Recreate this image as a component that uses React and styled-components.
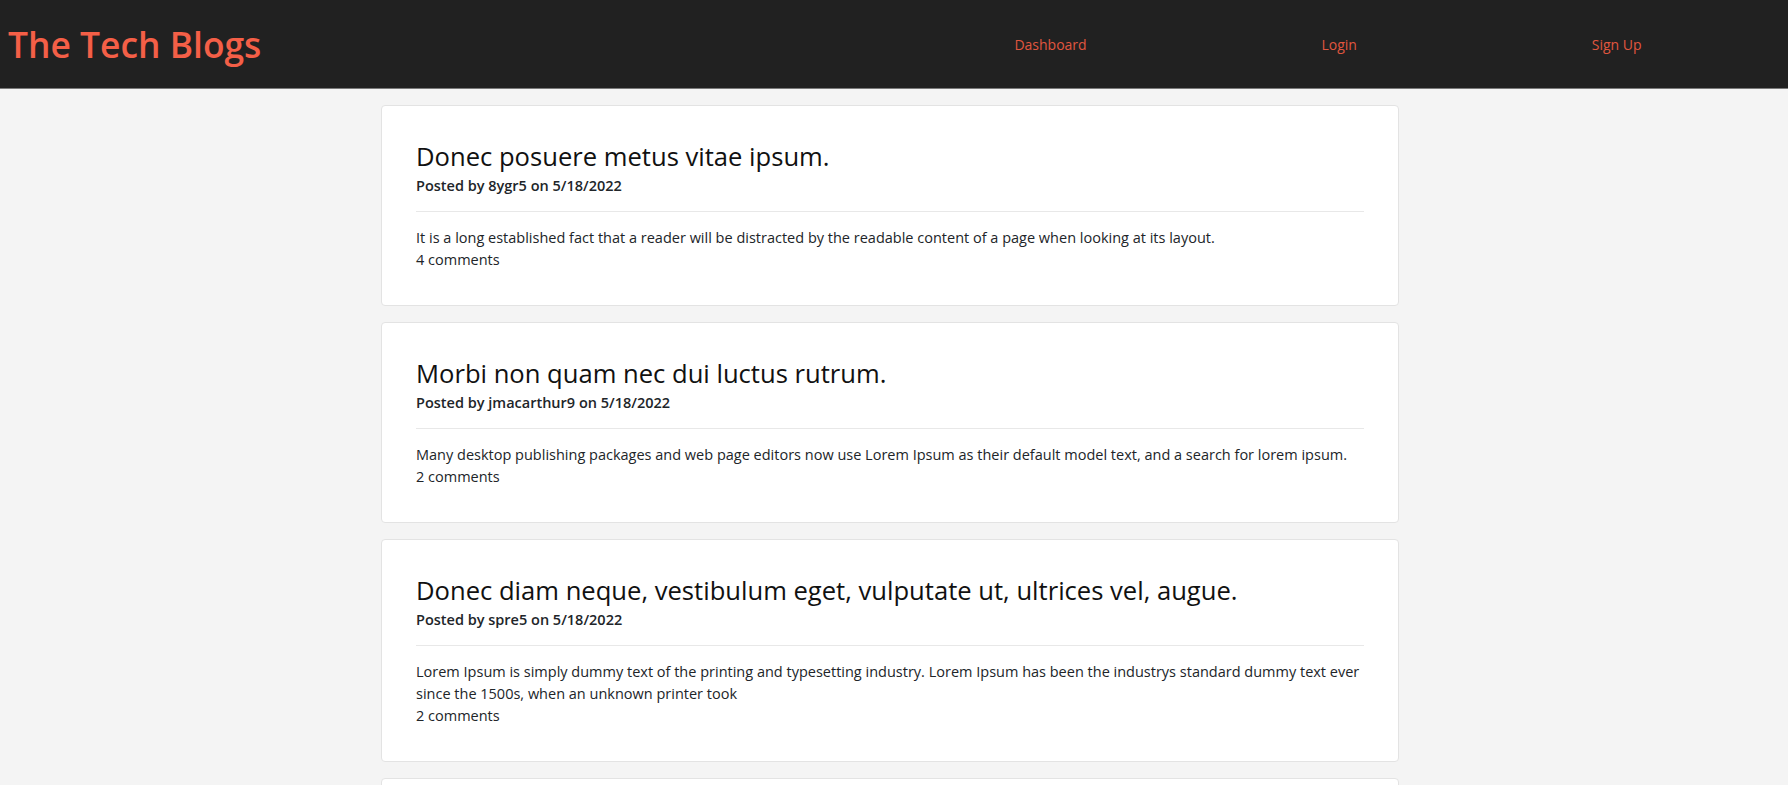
import React from 'react';
import styled, { createGlobalStyle } from 'styled-components';

const GlobalStyle = createGlobalStyle`
  body {
    margin: 0;
    background: #f4f4f4;
    font-family: "Open Sans", "Liberation Sans", sans-serif;
    color: #212529;
  }
`;

const Header = styled.header`
  height: 88px;
  background: #212121;
  border-bottom: 1px solid #7a7a7a;
  display: flex;
  align-items: center;
  justify-content: space-between;
`;

const Logo = styled.h1`
  margin: 0 0 0 8px;
  font-size: 35.4px;
  font-weight: 600;
  color: #f45f47;
`;

const Nav = styled.nav`
  width: 862px;
  margin-right: 29px;
  display: flex;
  justify-content: space-around;
`;

const NavLink = styled.a`
  font-size: 14px;
  color: #e0563f;
  text-decoration: none;
`;

const Main = styled.main`
  padding: 16px 0 0 381px;
  display: flex;
  flex-direction: column;
  gap: 16px;
`;

const Card = styled.article`
  width: 1018px;
  box-sizing: border-box;
  background: #fff;
  border: 1px solid #e3e3e3;
  border-radius: 4px;
  padding: 34px;
`;

const Title = styled.h2`
  margin: 0;
  font-size: 25.6px;
  font-weight: 500;
  line-height: 34px;
  color: #111;
`;

const Meta = styled.p`
  margin: 1px 0 0;
  font-size: 14.5px;
  font-weight: 600;
  line-height: 22px;
`;

const Rule = styled.hr`
  margin: 14px 0 15px;
  border: 0;
  border-top: 1px solid #e8e8e8;
`;

const Body = styled.p`
  margin: 0;
  font-size: 14.5px;
  line-height: 22px;
`;

const posts = [
  {
    title: 'Donec posuere metus vitae ipsum.',
    user: '8ygr5',
    body: 'It is a long established fact that a reader will be distracted by the readable content of a page when looking at its layout.',
    comments: 4,
  },
  {
    title: 'Morbi non quam nec dui luctus rutrum.',
    user: 'jmacarthur9',
    body: 'Many desktop publishing packages and web page editors now use Lorem Ipsum as their default model text, and a search for lorem ipsum.',
    comments: 2,
  },
  {
    title: 'Donec diam neque, vestibulum eget, vulputate ut, ultrices vel, augue.',
    user: 'spre5',
    body: 'Lorem Ipsum is simply dummy text of the printing and typesetting industry. Lorem Ipsum has been the industrys standard dummy text ever since the 1500s, when an unknown printer took',
    comments: 2,
  },
  {
    title: 'Donec posuere metus vitae ipsum.',
    user: '8ygr5',
    body: 'It is a long established fact that a reader will be distracted by the readable content of a page when looking at its layout.',
    comments: 1,
  },
];

export default function App() {
  return (
    <>
      <GlobalStyle />
      <Header>
        <Logo>The Tech Blogs</Logo>
        <Nav>
          <NavLink href="#">Dashboard</NavLink>
          <NavLink href="#">Login</NavLink>
          <NavLink href="#">Sign Up</NavLink>
        </Nav>
      </Header>
      <Main>
        {posts.map((p, i) => (
          <Card key={i}>
            <Title>{p.title}</Title>
            <Meta>Posted by {p.user} on 5/18/2022</Meta>
            <Rule />
            <Body>{p.body}</Body>
            <Body>{p.comments} comments</Body>
          </Card>
        ))}
      </Main>
    </>
  );
}
